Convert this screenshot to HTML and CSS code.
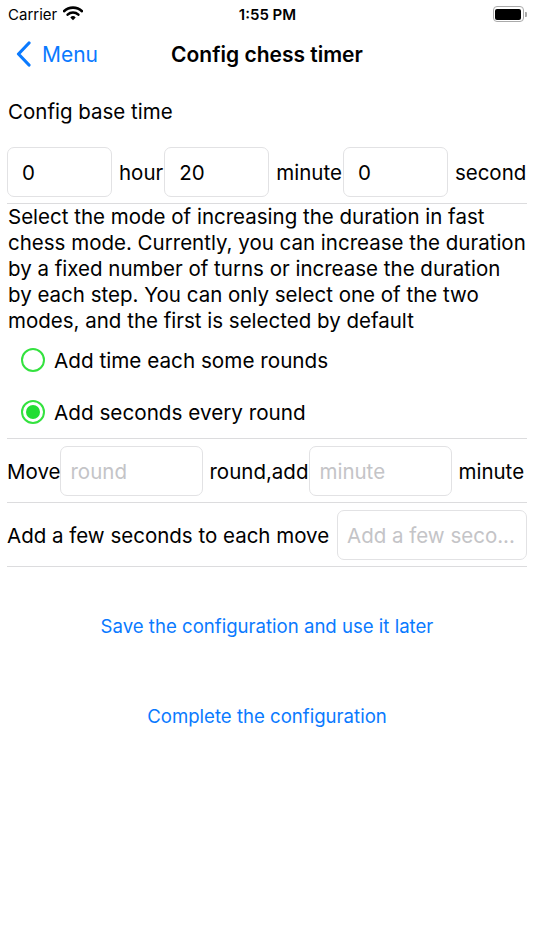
FILE: index.html
```html
<!DOCTYPE html>
<html lang="en">
  <head>
    <meta charset="UTF-8" />
    <meta name="viewport" content="width=device-width, initial-scale=1.0" />
    <title>Config chess timer</title>
    <link rel="stylesheet" href="styles.css">
  </head>
  <body>
    <div class="status-bar">
      <div class="status-left">
        <span>Carrier</span>
        <svg class="wifi" width="20" height="15" viewBox="0 0 20 15">
          <path d="M1 5.2 A13 13 0 0 1 19 5.2" fill="none" stroke="#000" stroke-width="2.6" stroke-linecap="round" />
          <path d="M4.6 8.6 A8 8 0 0 1 15.4 8.6" fill="none" stroke="#000" stroke-width="2.6" stroke-linecap="round" />
          <path d="M10 14.2 L7.3 11.4 A3.9 3.9 0 0 1 12.7 11.4 Z" fill="#000" />
        </svg>
      </div>
      <div class="status-time">1:55 PM</div>
      <div class="status-right">
        <div class="battery"><div class="battery-level"></div></div>
        <div class="battery-cap"></div>
      </div>
    </div>

    <div class="nav-bar">
      <a href="#" class="back-link">
        <svg width="16" height="26" viewBox="0 0 16 26">
          <path d="M13 2 L2.5 13 L13 24" fill="none" stroke="#0a7aff" stroke-width="3.2" stroke-linecap="round" stroke-linejoin="round" />
        </svg>
        <span>Menu</span>
      </a>
      <h1 class="nav-title">Config chess timer</h1>
      <div></div>
    </div>

    <div class="content">
      <p class="section-title">Config base time</p>

      <div class="field-row time-row">
        <input class="text-field" type="text" value="0" />
        <span class="unit">hour</span>
        <input class="text-field" type="text" value="20" />
        <span class="unit">minute</span>
        <input class="text-field" type="text" value="0" />
        <span class="unit">second</span>
      </div>

      <div class="divider"></div>

      <p class="description">
        Select the mode of increasing the duration in fast chess mode. Currently, you can increase the duration by a fixed number of turns or increase the duration by each step. You can only select one of the two modes, and the first is selected by default
      </p>

      <div class="mode-list">
        <label class="mode-option">
          <span class="radio"></span>
          <span>Add time each some rounds</span>
        </label>
        <label class="mode-option">
          <span class="radio checked"></span>
          <span>Add seconds every round</span>
        </label>
      </div>

      <div class="divider"></div>

      <div class="field-row setting-row">
        <span class="unit first">Move</span>
        <input class="text-field wide" type="text" placeholder="round" />
        <span class="unit">round,add</span>
        <input class="text-field wide" type="text" placeholder="minute" />
        <span class="unit">minute</span>
      </div>

      <div class="divider"></div>

      <div class="field-row setting-row">
        <span class="unit first">Add a few seconds to each move</span>
        <input class="text-field seconds" type="text" placeholder="Add a few seco..." />
      </div>

      <div class="divider"></div>

      <div class="actions">
        <button class="link-button">Save the configuration and use it later</button>
        <button class="link-button">Complete the configuration</button>
      </div>
    </div>
  </body>
</html>
```

FILE: styles.css
```css
body {
  font-family: Inter, "Liberation Sans", Arial, sans-serif;
  background-color: white;
  color: #000;
  margin: 0;
  width: 534px;
}

/* top status bar */
.status-bar {
  height: 28px;
  display: flex;
  align-items: center;
  justify-content: space-between;
  padding: 0 7px 0 8px;
  font-size: 15px;
}

.status-left {
  display: flex;
  align-items: center;
  gap: 6px;
  width: 120px;
}

.wifi {
  margin-top: -2px;
}

.status-time {
  font-weight: 600;
}

.status-right {
  width: 120px;
  display: flex;
  justify-content: flex-end;
  align-items: center;
}

.battery {
  width: 26px;
  height: 11px;
  border: 1.5px solid #aaa;
  border-radius: 4px;
  padding: 1.5px;
}

.battery-level {
  width: 100%;
  height: 100%;
  background-color: #000;
  border-radius: 2px;
}

.battery-cap {
  width: 2px;
  height: 5px;
  margin-left: 1px;
  background-color: #aaa;
  border-radius: 0 1px 1px 0;
}

/* navigation bar */
.nav-bar {
  height: 52px;
  display: grid;
  grid-template-columns: 1fr auto 1fr;
  align-items: center;
}

.back-link {
  display: flex;
  align-items: center;
  gap: 10px;
  padding-left: 16px;
  color: #0a7aff;
  text-decoration: none;
  font-size: 21px;
}

.nav-title {
  margin: 0;
  font-size: 21px;
  font-weight: 600;
}

/* form area */
.content {
  padding: 0 7px;
}

.section-title {
  margin: 19px 0 0 1px;
  font-size: 20.5px;
  line-height: 26px;
}

.field-row {
  display: flex;
  align-items: center;
}

.time-row {
  margin-top: 22px;
  margin-bottom: 6px;
}

.text-field {
  width: 105px;
  height: 50px;
  box-sizing: border-box;
  border: 1px solid #e2e2e4;
  border-radius: 7px;
  padding: 0 14px;
  font-family: inherit;
  font-size: 20.5px;
  color: #000;
  outline: none;
}

.text-field::placeholder {
  color: #c4c4c7;
}

.text-field.wide {
  width: 143px;
  padding: 0 9px;
}

.text-field.seconds {
  width: 190px;
  margin-left: auto;
  padding: 0 9px;
}

.unit {
  font-size: 20.5px;
  padding: 0 1px 0 7px;
}

.unit.first {
  padding: 0 0 0 1px;
}

.setting-row .unit {
  padding-left: 6px;
}

.setting-row .unit.first {
  padding-left: 0;
}

.divider {
  height: 1px;
  background-color: #dcdcde;
}

.description {
  margin: 0 0 0 1px;
  font-size: 20.5px;
  line-height: 26px;
}

.mode-option {
  height: 52px;
  display: flex;
  align-items: center;
  gap: 9px;
  padding-left: 14px;
  font-size: 20.7px;
}

.radio {
  width: 24px;
  height: 24px;
  box-sizing: border-box;
  border: 2px solid #34e23f;
  border-radius: 50%;
  display: flex;
  align-items: center;
  justify-content: center;
}

.radio.checked::after {
  content: "";
  width: 14px;
  height: 14px;
  border-radius: 50%;
  background-color: #22dd33;
}

.setting-row {
  padding: 7px 0 6px;
}

.actions {
  display: flex;
  flex-direction: column;
  align-items: center;
  gap: 50px;
  padding-top: 39px;
}

.link-button {
  height: 40px;
  background: none;
  border: none;
  color: #0a7aff;
  font-family: inherit;
  font-size: 18.6px;
  cursor: pointer;
}
```
